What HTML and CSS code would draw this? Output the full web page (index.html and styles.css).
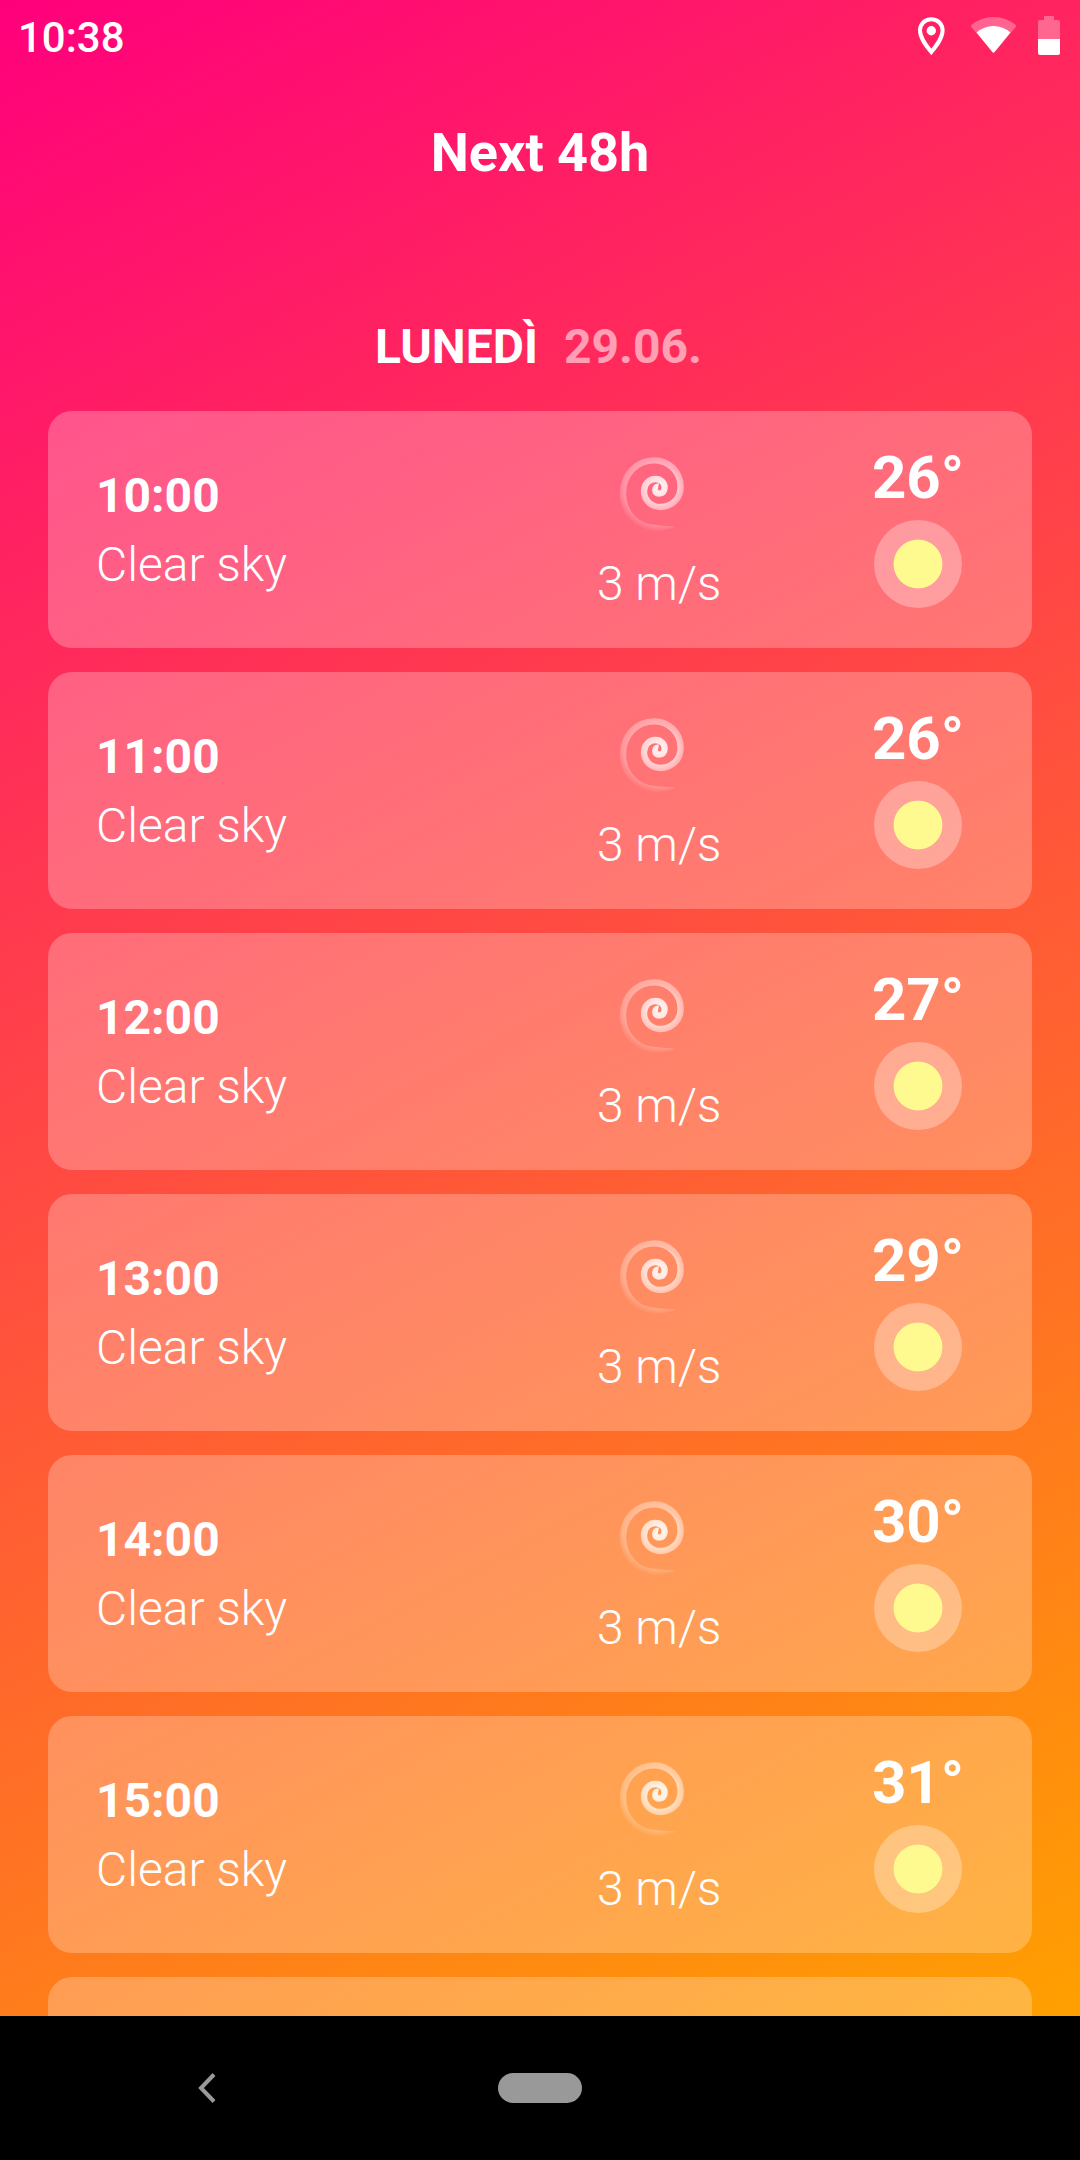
FILE: index.html
```html
<!DOCTYPE html>
<html lang="it">

<head>
    <meta charset="UTF-8">
    <meta name="viewport" content="width=device-width, initial-scale=1.0">
    <title>Next 48h</title>
    <link rel="stylesheet" href="styles.css">
</head>

<body>
    <svg class="sprite" width="0" height="0">
        <defs>
            <radialGradient id="windFade" gradientUnits="userSpaceOnUse" cx="238" cy="172" r="134">
                <stop offset="0" stop-color="#fff" stop-opacity="0.95" />
                <stop offset="0.4" stop-color="#fff" stop-opacity="0.65" />
                <stop offset="0.52" stop-color="#fff" stop-opacity="0.45" />
                <stop offset="0.82" stop-color="#fff" stop-opacity="0.28" />
                <stop offset="1" stop-color="#fff" stop-opacity="0" />
            </radialGradient>
            <symbol id="wind" viewBox="110 75 210 234">
                <path fill="none" stroke="url(#windFade)" stroke-width="19"
                    d="M222 294 C168 292 128 246 128 190 C128 132 170 91 222 91 C266 91 301 126 301 170 C301 206 274 231 241 231 C212 231 191 210 191 184 C191 162 206 147 226 147 C242 147 253 159 253 172 C253 184 246 191 236 191 C229 191 224 186 225 179 C225 173 229 169 234 170" />
                <path fill="url(#windFade)" d="M222 284.5 Q240 288 285 289 V293 Q250 302 222 303.500 Z" />
            </symbol>
        </defs>
    </svg>

    <div class="screen">
        <div class="status-bar">
            <span class="clock">10:38</span>
            <svg class="status-icons" width="144" height="40" viewBox="0 0 144 40">
                <path d="M13.3 3.3 C6.8 3.3 2 8 2 14.5 C2 22 8 29.5 13.3 36 C18.6 29.5 24.6 22 24.6 14.5 C24.6 8 19.8 3.3 13.3 3.3 Z" fill="none" stroke="#fff" stroke-width="4" />
                <circle cx="13.3" cy="14.7" r="4.7" fill="#fff" />
                <path d="M53.3 9 Q63 1 75.5 1 Q88 1 97.7 9 Q98.5 10 97.7 11 L76.6 36 Q75.5 37.3 74.4 36 L53.3 11 Q52.5 10 53.3 9 Z" fill="#fff" fill-opacity="0.3" />
                <path d="M58.6 16.5 Q66 10 75.5 10 Q85 10 92.4 16.5 L76.6 36 Q75.5 37.3 74.4 36 Z" fill="#fff" />
                <path d="M120 23 V6 Q120 4 122 4 H126 V0 H136 V4 H140 Q142 4 142 6 V23 Z" fill="#fff" fill-opacity="0.3" />
                <path d="M120 23 H142 V37 Q142 39 140 39 H122 Q120 39 120 37 Z" fill="#fff" />
            </svg>
        </div>

        <h1 class="title">Next 48h</h1>
        <h2 class="day">LUNEDÌ <span class="date">29.06.</span></h2>

        <div class="hours">
            <div class="card">
                <div class="info">
                    <strong>10:00</strong>
                    <span>Clear sky</span>
                </div>
                <div class="wind">
                    <svg class="wind-icon"><use href="#wind" /></svg>
                    <span>3 m/s</span>
                </div>
                <div class="temp">
                    <strong>26°</strong>
                    <div class="sun"></div>
                </div>
            </div>
            <div class="card">
                <div class="info">
                    <strong>11:00</strong>
                    <span>Clear sky</span>
                </div>
                <div class="wind">
                    <svg class="wind-icon"><use href="#wind" /></svg>
                    <span>3 m/s</span>
                </div>
                <div class="temp">
                    <strong>26°</strong>
                    <div class="sun"></div>
                </div>
            </div>
            <div class="card">
                <div class="info">
                    <strong>12:00</strong>
                    <span>Clear sky</span>
                </div>
                <div class="wind">
                    <svg class="wind-icon"><use href="#wind" /></svg>
                    <span>3 m/s</span>
                </div>
                <div class="temp">
                    <strong>27°</strong>
                    <div class="sun"></div>
                </div>
            </div>
            <div class="card">
                <div class="info">
                    <strong>13:00</strong>
                    <span>Clear sky</span>
                </div>
                <div class="wind">
                    <svg class="wind-icon"><use href="#wind" /></svg>
                    <span>3 m/s</span>
                </div>
                <div class="temp">
                    <strong>29°</strong>
                    <div class="sun"></div>
                </div>
            </div>
            <div class="card">
                <div class="info">
                    <strong>14:00</strong>
                    <span>Clear sky</span>
                </div>
                <div class="wind">
                    <svg class="wind-icon"><use href="#wind" /></svg>
                    <span>3 m/s</span>
                </div>
                <div class="temp">
                    <strong>30°</strong>
                    <div class="sun"></div>
                </div>
            </div>
            <div class="card">
                <div class="info">
                    <strong>15:00</strong>
                    <span>Clear sky</span>
                </div>
                <div class="wind">
                    <svg class="wind-icon"><use href="#wind" /></svg>
                    <span>3 m/s</span>
                </div>
                <div class="temp">
                    <strong>31°</strong>
                    <div class="sun"></div>
                </div>
            </div>
            <div class="card"></div>
        </div>
    </div>

    <div class="nav-bar">
        <svg class="back" width="20" height="32" viewBox="0 0 20 32">
            <path d="M17 2.5 L4 16 L17 29.5" fill="none" stroke="#999" stroke-width="4" />
        </svg>
        <div class="home"></div>
    </div>
</body>

</html>
```
FILE: styles.css
```css
* {
    box-sizing: border-box;
}

body {
    margin: 0;
    height: 2160px;
    overflow: hidden;
    background-color: #000;
    color: #fff;
    font-family: Roboto, sans-serif;
}

.sprite {
    display: block;
}

.screen {
    height: 2016px;
    overflow: hidden;
    background: linear-gradient(151.8deg, #ff007c, #ffa000);
}

.status-bar {
    display: flex;
    justify-content: space-between;
    align-items: flex-start;
    height: 72px;
    padding: 12px 18px 0;
}

.clock {
    margin-top: 1px;
    font-size: 42px;
    font-weight: 500;
    line-height: 50px;
}

.status-icons {
    margin-top: 4px;
}

.title {
    margin: 49px 0 0;
    font-size: 54px;
    font-weight: 700;
    line-height: 64px;
    text-align: center;
}

.day {
    display: flex;
    justify-content: center;
    gap: 26px;
    margin: 134px 0 0;
    padding-right: 3px;
    font-size: 48px;
    font-weight: 700;
    line-height: 56px;
}

.date {
    opacity: 0.55;
}

.hours {
    display: flex;
    flex-direction: column;
    gap: 24px;
    padding: 36px 48px 0;
}

.card {
    display: flex;
    align-items: flex-start;
    height: 237px;
    flex-shrink: 0;
    padding: 0 48px;
    border-radius: 24px;
    background-color: rgba(255, 255, 255, 0.25);
    font-size: 48px;
}

.info {
    display: flex;
    flex-direction: column;
    width: 501px;
    padding-top: 50px;
    font-weight: 300;
    line-height: 69px;
}

.info strong,
.temp strong {
    font-weight: 700;
}

.wind {
    display: flex;
    flex-direction: column;
    width: 274px;
    padding-top: 44px;
    font-weight: 300;
    line-height: 56px;
}

.wind-icon {
    width: 70px;
    height: 78px;
    margin: 0 0 23px 20px;
}

.temp {
    display: flex;
    flex-direction: column;
    align-items: center;
    width: 94px;
    padding-top: 32px;
    font-size: 60px;
    line-height: 70px;
}

.sun {
    width: 88px;
    height: 88px;
    margin-top: 7px;
    border-radius: 50%;
    background: radial-gradient(circle, #fffa90 24px, rgba(255, 255, 255, 0.3) 24.8px);
}

.nav-bar {
    display: flex;
    align-items: center;
    height: 144px;
    padding-left: 197px;
    background-color: #000;
}

.home {
    width: 84px;
    height: 30px;
    margin-left: 281px;
    border-radius: 15px;
    background-color: #999;
}
```
